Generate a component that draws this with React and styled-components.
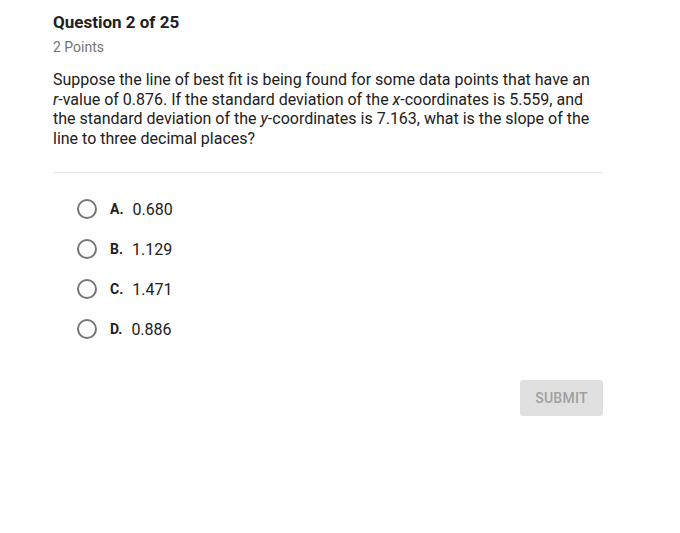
import React from 'react';
import styled, { createGlobalStyle } from 'styled-components';

const GlobalStyle = createGlobalStyle`
  body {
    margin: 0;
    background: #fff;
    font-family: Roboto, "Liberation Sans", Arial, sans-serif;
    color: #212121;
  }
`;

const Page = styled.div`
  width: 550px;
  padding: 12px 0 0 53px;
`;

const Title = styled.h1`
  margin: 0;
  font-size: 17px;
  font-weight: 700;
  line-height: 21px;
  color: #212121;
`;

const Points = styled.div`
  margin-top: 6px;
  font-size: 14px;
  line-height: 17px;
  color: #757575;
`;

const Prompt = styled.p`
  margin: 14px 0 0;
  font-size: 16px;
  line-height: 19.5px;
  color: #212121;
  i {
    font-style: italic;
  }
`;

const Divider = styled.hr`
  margin: 24px 0 0;
  border: 0;
  border-top: 1px solid #e4e4e4;
`;

const Options = styled.div`
  display: flex;
  flex-direction: column;
  gap: 20px;
  padding: 26px 0 0 24px;
`;

const Option = styled.label`
  display: flex;
  align-items: center;
  height: 20px;
  font-size: 16px;
  cursor: pointer;
`;

const Radio = styled.span`
  box-sizing: border-box;
  width: 20px;
  height: 20px;
  border: 2px solid #757575;
  border-radius: 50%;
  margin-right: 13px;
`;

const Letter = styled.span`
  font-weight: 700;
  font-size: 14px;
  margin-right: 9px;
`;

const Footer = styled.div`
  display: flex;
  justify-content: flex-end;
  margin-top: 41px;
`;

const SubmitButton = styled.button`
  width: 83px;
  height: 36px;
  border: 0;
  border-radius: 3px;
  background: #e0e0e0;
  color: #a0a0a0;
  font-family: inherit;
  font-size: 14px;
  font-weight: 500;
  letter-spacing: 0.02em;
`;

const answers = [
  ['A.', '0.680'],
  ['B.', '1.129'],
  ['C.', '1.471'],
  ['D.', '0.886'],
];

export default function App() {
  return (
    <>
      <GlobalStyle />
      <Page>
        <Title>Question 2 of 25</Title>
        <Points>2 Points</Points>
        <Prompt>
          Suppose the line of best fit is being found for some data points that have an{' '}
          <i>r</i>-value of 0.876. If the standard deviation of the <i>x</i>-coordinates is
          5.559, and the standard deviation of the <i>y</i>-coordinates is 7.163, what is the
          slope of the line to three decimal places?
        </Prompt>
        <Divider />
        <Options>
          {answers.map(([letter, value]) => (
            <Option key={letter}>
              <Radio />
              <Letter>{letter}</Letter>
              {value}
            </Option>
          ))}
        </Options>
        <Footer>
          <SubmitButton disabled>SUBMIT</SubmitButton>
        </Footer>
      </Page>
    </>
  );
}
